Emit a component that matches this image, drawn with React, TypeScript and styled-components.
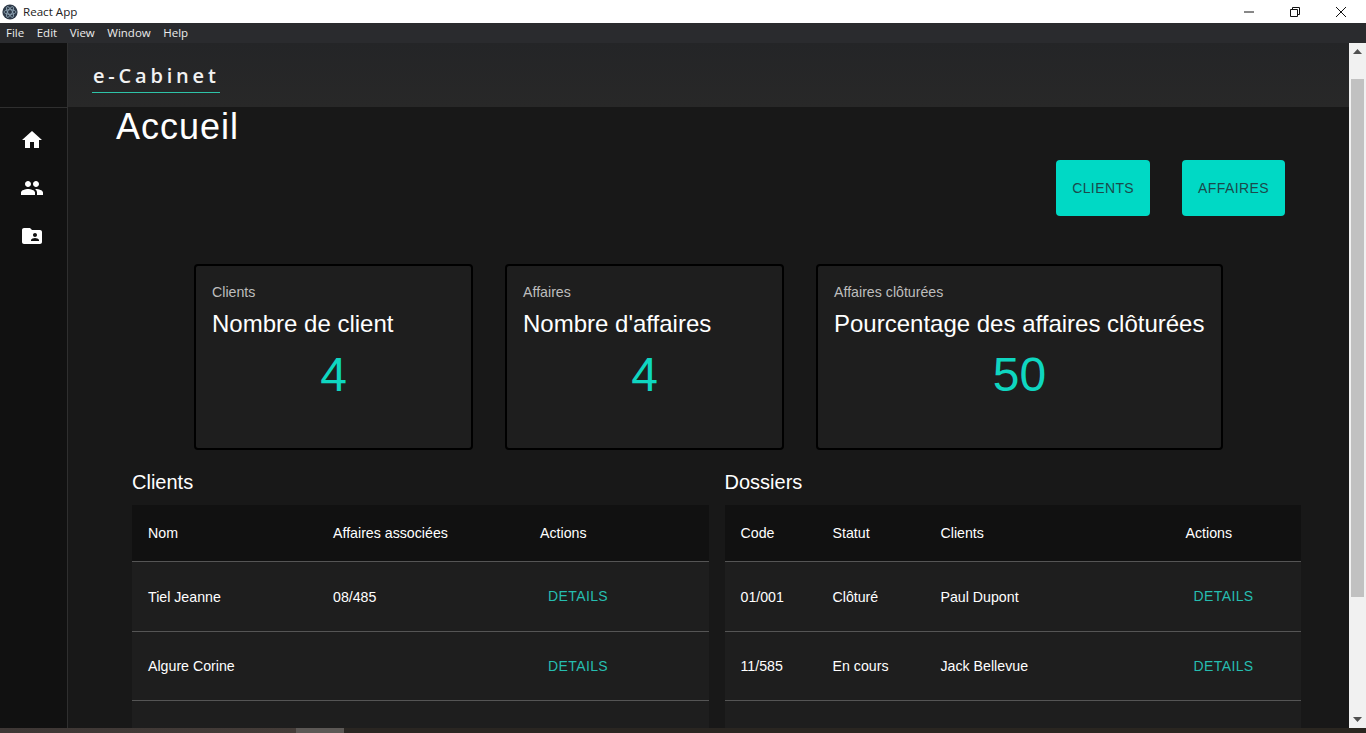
import React from "react"
import styled, { createGlobalStyle } from "styled-components"
import { MdHome, MdPeople, MdFolderShared } from "react-icons/md"

const GlobalStyle = createGlobalStyle`
	html, body {
		margin: 0;
		padding: 0;
		height: 100%;
		overflow: hidden;
		background: #181818;
	}
	* {
		box-sizing: border-box;
	}
`

const clientRows = [
	{ id: "a", cells: ["Tiel Jeanne", "08/485"] },
	{ id: "b", cells: ["Algure Corine", ""] },
	{ id: "c", cells: ["", ""] },
]

const folderRows = [
	{ id: "a", cells: ["01/001", "Clôturé", "Paul Dupont"] },
	{ id: "b", cells: ["11/585", "En cours", "Jack Bellevue"] },
	{ id: "c", cells: ["", "", ""] },
]

const DataTable = ({
	title,
	heads,
	widths,
	rows,
}: {
	title: string
	heads: string[]
	widths: number[]
	rows: { id: string; cells: string[] }[]
}) => (
	<TableBlock>
		<TableTitle>{title}</TableTitle>
		<Table>
			<colgroup>
				{widths.map((w, i) => (
					<col key={i} style={{ width: w }} />
				))}
			</colgroup>
			<thead>
				<tr>
					{heads.map((h) => (
						<Th key={h}>{h}</Th>
					))}
				</tr>
			</thead>
			<tbody>
				{rows.map((row) => (
					<Row key={row.id}>
						{row.cells.map((c, i) => (
							<Td key={i}>{c}</Td>
						))}
						<Td>{row.id !== "c" && <DetailsButton>DETAILS</DetailsButton>}</Td>
					</Row>
				))}
			</tbody>
		</Table>
	</TableBlock>
)

const App = () => {
	return (
		<>
			<GlobalStyle />
			<Window>
				<TitleBar>
					<AppIcon viewBox="0 0 16 16">
						<circle cx="8" cy="8" r="7.6" fill="#2f3b4a" />
						<g fill="none" stroke="#9fb6c6" strokeWidth="0.7">
							<ellipse cx="8" cy="8" rx="6" ry="2.3" />
							<ellipse cx="8" cy="8" rx="6" ry="2.3" transform="rotate(60 8 8)" />
							<ellipse cx="8" cy="8" rx="6" ry="2.3" transform="rotate(120 8 8)" />
						</g>
					</AppIcon>
					<WindowTitle>React App</WindowTitle>
					<WindowControls>
						<WindowButton>
							<svg width="12" height="12" viewBox="0 0 12 12">
								<path d="M1 6h10" stroke="#111" strokeWidth="1" />
							</svg>
						</WindowButton>
						<WindowButton>
							<svg width="12" height="12" viewBox="0 0 12 12" fill="none">
								<path d="M1.5 3.5h7v7h-7z M3.5 3.5v-2h7v7h-2" stroke="#111" strokeWidth="1" />
							</svg>
						</WindowButton>
						<WindowButton>
							<svg width="12" height="12" viewBox="0 0 12 12">
								<path d="M1 1l10 10M11 1L1 11" stroke="#111" strokeWidth="1" />
							</svg>
						</WindowButton>
					</WindowControls>
				</TitleBar>
				<MenuBar>
					{["File", "Edit", "View", "Window", "Help"].map((m) => (
						<MenuItem key={m}>{m}</MenuItem>
					))}
				</MenuBar>
				<Body>
					<Sidebar>
						<SidebarTop />
						<SideNav>
							<SideItem>
								<MdHome size={24} />
							</SideItem>
							<SideItem>
								<MdPeople size={24} />
							</SideItem>
							<SideItem>
								<MdFolderShared size={24} />
							</SideItem>
						</SideNav>
					</Sidebar>
					<Main>
						<Header>
							<Brand>e-Cabinet</Brand>
						</Header>
						<Content>
							<PageTitle>Accueil</PageTitle>
							<Actions>
								<ActionButton>CLIENTS</ActionButton>
								<ActionButton>AFFAIRES</ActionButton>
							</Actions>
							<Cards>
								<Card $width={279}>
									<CardLabel>Clients</CardLabel>
									<CardTitle>Nombre de client</CardTitle>
									<CardValue>4</CardValue>
								</Card>
								<Card $width={279}>
									<CardLabel>Affaires</CardLabel>
									<CardTitle>Nombre d'affaires</CardTitle>
									<CardValue>4</CardValue>
								</Card>
								<Card $width={407}>
									<CardLabel>Affaires clôturées</CardLabel>
									<CardTitle>Pourcentage des affaires clôturées</CardTitle>
									<CardValue>50</CardValue>
								</Card>
							</Cards>
							<Tables>
								<DataTable
									title="Clients"
									heads={["Nom", "Affaires associées", "Actions"]}
									widths={[185, 207, 184.5]}
									rows={clientRows}
								/>
								<DataTable
									title="Dossiers"
									heads={["Code", "Statut", "Clients", "Actions"]}
									widths={[92, 108, 245, 131.5]}
									rows={folderRows}
								/>
							</Tables>
						</Content>
					</Main>
					<ScrollBar>
						<ScrollArrow>
							<svg width="9" height="5" viewBox="0 0 9 5">
								<path d="M0 5L4.5 0L9 5z" fill="#505050" />
							</svg>
						</ScrollArrow>
						<ScrollTrack>
							<ScrollThumb />
						</ScrollTrack>
						<ScrollArrow>
							<svg width="9" height="5" viewBox="0 0 9 5">
								<path d="M0 0L4.5 5L9 0z" fill="#505050" />
							</svg>
						</ScrollArrow>
					</ScrollBar>
				</Body>
				<BottomStrip>
					<BottomThumb />
				</BottomStrip>
			</Window>
		</>
	)
}

export default App

const Window = styled.div`
	width: 1366px;
	height: 733px;
	display: flex;
	flex-direction: column;
	overflow: hidden;
`

const TitleBar = styled.div`
	height: 23px;
	flex: none;
	display: flex;
	align-items: center;
	padding-left: 2px;
	background: #ffffff;
`

const AppIcon = styled.svg`
	width: 16px;
	height: 16px;
`

const WindowTitle = styled.span`
	margin-left: 5px;
	font-family: "Open Sans", sans-serif;
	font-size: 11.6px;
	color: #222222;
`

const WindowControls = styled.div`
	margin-left: auto;
	display: flex;
	padding-right: 2px;
`

const WindowButton = styled.div`
	width: 46px;
	height: 23px;
	display: flex;
	align-items: center;
	justify-content: center;
`

const MenuBar = styled.div`
	height: 20px;
	flex: none;
	display: flex;
	align-items: center;
	padding: 0 0 2px 6px;
	gap: 12.5px;
	background: #2a2b2e;
`

const MenuItem = styled.span`
	font-family: "Open Sans", sans-serif;
	font-size: 11.5px;
	color: #ececec;
`

const Body = styled.div`
	flex: 1;
	min-height: 0;
	display: flex;
`

const Sidebar = styled.nav`
	width: 68px;
	flex: none;
	background: #111111;
	border-right: 1px solid #2f2f2f;
`

const SidebarTop = styled.div`
	height: 65px;
	border-bottom: 1px solid #2f2f2f;
`

const SideNav = styled.div`
	padding: 8px 3px 0 0;
`

const SideItem = styled.div`
	height: 48px;
	display: flex;
	align-items: center;
	justify-content: center;
	color: #ffffff;
`

const Main = styled.div`
	flex: 1;
	min-width: 0;
	display: flex;
	flex-direction: column;
	overflow: hidden;
`

const Header = styled.header`
	height: 65px;
	flex: none;
	padding: 16px 0 0 24px;
	background: linear-gradient(180deg, #242527 0%, #282828 100%);
	border-bottom: 1px solid #181818;
`

const Brand = styled.div`
	display: inline-block;
	height: 34px;
	padding: 5px 0 0 1px;
	width: 128px;
	font-family: "Open Sans", sans-serif;
	font-weight: 600;
	font-size: 20px;
	line-height: 24px;
	letter-spacing: 3.8px;
	color: #f2f2f2;
	border-bottom: 1px solid #2ec4a8;
`

const Content = styled.main`
	flex: 1;
	min-height: 0;
	padding: 0 48px;
	background: #181818;
`

const PageTitle = styled.h1`
	margin: 0;
	height: 38px;
	font-family: "Liberation Sans", sans-serif;
	font-weight: 400;
	font-size: 36px;
	line-height: 38px;
	letter-spacing: 1px;
	color: #ffffff;
`

const Actions = styled.div`
	display: flex;
	justify-content: flex-end;
	gap: 32px;
	margin-top: 14px;
	padding-right: 16px;
`

const ActionButton = styled.button`
	height: 56px;
	padding: 0 16px;
	border: 0;
	border-radius: 4px;
	background: #00d9c5;
	font-family: "Liberation Sans", sans-serif;
	font-size: 14px;
	letter-spacing: 0.4px;
	color: #1b4a4c;
`

const Cards = styled.div`
	display: flex;
	justify-content: center;
	gap: 32px;
	margin-top: 48px;
`

const Card = styled.section<{ $width: number }>`
	width: ${(p) => p.$width}px;
	height: 186px;
	padding: 16px;
	background: #1e1e1e;
	border: 2px solid #000000;
	border-radius: 4px;
`

const CardLabel = styled.div`
	font-family: "Liberation Sans", sans-serif;
	font-size: 14.2px;
	line-height: 20px;
	color: #bdbdbd;
`

const CardTitle = styled.h2`
	margin: 6px 0 0;
	font-family: "Liberation Sans", sans-serif;
	font-weight: 400;
	font-size: 24px;
	line-height: 32px;
	color: #ffffff;
	white-space: nowrap;
`

const CardValue = styled.div`
	margin-top: 7px;
	text-align: center;
	font-family: "Liberation Sans", sans-serif;
	font-size: 48px;
	line-height: 56px;
	color: #0fd6c0;
`

const Tables = styled.div`
	display: flex;
	gap: 16px;
	margin-top: 16px;
	padding-left: 16px;
`

const TableBlock = styled.div`
	width: 576.5px;
	flex: none;
`

const TableTitle = styled.h3`
	margin: 0 0 6px;
	font-family: "Liberation Sans", sans-serif;
	font-weight: 400;
	font-size: 20px;
	line-height: 33px;
	color: #ffffff;
`

const Table = styled.table`
	width: 100%;
	table-layout: fixed;
	border-collapse: collapse;
	background: #1e1e1e;
	font-family: "Liberation Sans", sans-serif;
	font-size: 14.2px;
	color: #ffffff;
`

const Th = styled.th`
	height: 56px;
	padding: 0 16px;
	text-align: left;
	font-weight: 400;
	background: #111111;
	border-bottom: 1px solid #555555;
`

const Td = styled.td`
	height: 69px;
	padding: 1px 16px 0;
	border-bottom: 1px solid #555555;
`

const Row = styled.tr`
	&:first-child ${Td} {
		height: 70px;
		padding-top: 2px;
	}
`

const DetailsButton = styled.span`
	display: inline-block;
	padding: 0 8px;
	position: relative;
	top: -1px;
	font-size: 14px;
	letter-spacing: 0.4px;
	color: #26bdb0;

	${Row}:nth-child(2) & {
		top: 0;
	}
`

const ScrollBar = styled.div`
	width: 17px;
	flex: none;
	display: flex;
	flex-direction: column;
	background: #f1f1f1;
`

const ScrollArrow = styled.div`
	height: 17px;
	flex: none;
	display: flex;
	align-items: center;
	justify-content: center;
`

const ScrollTrack = styled.div`
	flex: 1;
	padding: 19px 2px 0;
`

const ScrollThumb = styled.div`
	height: 518px;
	background: #c1c1c1;
`

const BottomStrip = styled.div`
	height: 5px;
	flex: none;
	padding-left: 296px;
	background: linear-gradient(90deg, #3e3735 0, #443c38 296px, #2a2622 344px, #2a2620 100%);
`

const BottomThumb = styled.div`
	width: 48px;
	height: 5px;
	background: #5c5855;
`
